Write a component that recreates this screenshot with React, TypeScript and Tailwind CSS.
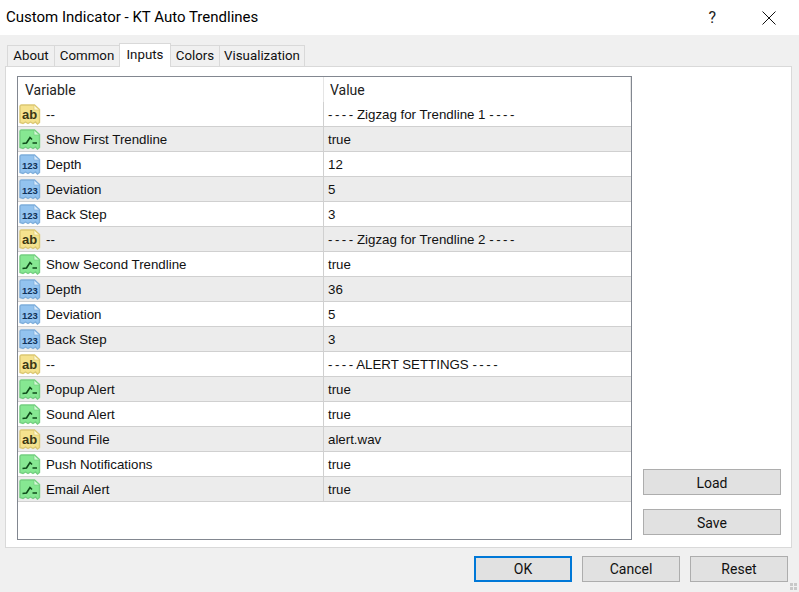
const ui = "[font-family:'Roboto','Open_Sans',sans-serif]";
const cell = "[font-family:'Liberation_Sans',Arial,sans-serif]";

type Kind = "ab" | "bool" | "num";
const rows: [Kind, string, string, boolean?][] = [
  ["ab", "--", "Zigzag for Trendline 1", true],
  ["bool", "Show First Trendline", "true"],
  ["num", "Depth", "12"],
  ["num", "Deviation", "5"],
  ["num", "Back Step", "3"],
  ["ab", "--", "Zigzag for Trendline 2", true],
  ["bool", "Show Second Trendline", "true"],
  ["num", "Depth", "36"],
  ["num", "Deviation", "5"],
  ["num", "Back Step", "3"],
  ["ab", "--", "ALERT SETTINGS", true],
  ["bool", "Popup Alert", "true"],
  ["bool", "Sound Alert", "true"],
  ["ab", "Sound File", "alert.wav"],
  ["bool", "Push Notifications", "true"],
  ["bool", "Email Alert", "true"],
];

const palette = {
  ab: { fill: "#f5e28e", edge: "#dcc873", fold: "#fff8d0" },
  bool: { fill: "#86e892", edge: "#74cf80", fold: "#d3f8d6" },
  num: { fill: "#93c3ef", edge: "#7eaedb", fold: "#d8eafb" },
};

function Icon({ kind }: { kind: Kind }) {
  const c = palette[kind];
  return (
    <svg width="22" height="21" viewBox="0 0 22 21" className="shrink-0">
      <path
        d="M1 2.5 Q1 1 2.5 1 L15.5 1 L20.5 5.5 L20.5 18.5 L18.5 20 L16.5 18 L14 19.5 L11.5 18 L9 19.5 L6.5 18 L4 19.5 L1 18.5 Z"
        fill={c.fill}
        stroke={c.edge}
        strokeWidth="1.4"
      />
      <path d="M15 1 L15 6 L20.5 6 Z" fill={c.fold} stroke={c.edge} strokeWidth="0.7" />
      {kind === "ab" && (
        <text x="3" y="15" fontSize="13" fontWeight="700" fill="#3b3716" fontFamily="'Liberation Sans',sans-serif">
          ab
        </text>
      )}
      {kind === "bool" && (
        <path d="M3.5 14.5 L7.5 14 L11 8.5 L13 10.5 M13.5 14 L18 14" fill="none" stroke="#0f4a1a" strokeWidth="1.6" />
      )}
      {kind === "num" && (
        <text x="3" y="14.5" fontSize="9.5" fontWeight="700" fill="#10325a" fontFamily="'Liberation Sans',sans-serif">
          123
        </text>
      )}
    </svg>
  );
}

function Dashes() {
  return <span className="[word-spacing:-1.2px]">- - - -</span>;
}

function Tab({ label, w, active }: { label: string; w: string; active?: boolean }) {
  return active ? (
    <div className={`${w} h-[24px] -mb-px -ml-px z-10 relative bg-white border border-b-0 border-[#d9d9d9] flex justify-center pt-[1px] text-[13.3px] leading-[20px] text-[#111]`}>
      {label}
    </div>
  ) : (
    <div className={`${w} h-[21px] bg-[#f0f0f0] border border-b-0 border-[#d9d9d9] -ml-px first:ml-0 flex justify-center text-[13.3px] leading-[20px] text-[#111]`}>
      {label}
    </div>
  );
}

function Btn({ label, w, primary, low }: { label: string; w: string; primary?: boolean; low?: boolean }) {
  return (
    <div
      className={`${w} h-[26px] bg-[#e1e1e1] flex items-center justify-center text-[14px] text-[#111] ${
        primary ? "border-2 border-[#0078d7]" : "border border-[#adadad]"
      } ${low ? "pt-[2px]" : ""}`}
    >
      {label}
    </div>
  );
}

export default function App() {
  return (
    <div className={`${ui} w-[799px] h-[592px] bg-[#f0f0f0] flex flex-col overflow-hidden relative`}>
      <div className="h-[35px] bg-white flex items-center pl-[6px] shrink-0">
        <span className="text-[15px] text-black flex-1 pb-[1px]">Custom Indicator - KT Auto Trendlines</span>
        <span className="text-[16px] text-[#222] mr-[46px]">?</span>
        <svg width="14" height="14" viewBox="0 0 14 14" className="mr-[23px]">
          <path d="M0.5 0.5 L13.5 13.5 M13.5 0.5 L0.5 13.5" stroke="#111" strokeWidth="1" />
        </svg>
      </div>

      <div className="h-[31px] pl-[7px] flex items-end shrink-0">
        <Tab label="About" w="w-[48px]" />
        <Tab label="Common" w="w-[66px]" />
        <Tab label="Inputs" w="w-[52px]" active />
        <Tab label="Colors" w="w-[50px]" />
        <Tab label="Visualization" w="w-[86px]" />
      </div>

      <div className="ml-[5px] w-[787px] h-[482px] bg-white border border-[#d9d9d9] flex pl-[11px] pt-[9px] shrink-0">
        <div className="w-[615px] h-[464px] border border-[#828790] bg-white shrink-0">
          <div className="h-[25px] flex text-[14px] text-[#222] leading-[27px]">
            <div className="w-[306px] pl-[7px] border-r border-[#e5e5e5]">Variable</div>
            <div className="w-[307px] pl-[6px] border-r border-[#e5e5e5]">Value</div>
          </div>
          {rows.map(([kind, name, value, heading], i) => (
            <div
              key={i}
              className={`${cell} h-[25px] w-[613px] flex border-b border-[#d0d0d0] text-[13.3px] text-[#111] ${
                i % 2 === 1 ? "bg-[#ececec]" : "bg-white"
              }`}
            >
              <div className="w-[306px] flex items-center pl-[1px] gap-[5px] border-r border-[#d0d0d0]">
                <Icon kind={kind} />
                <span className="pt-[2px]">{name}</span>
              </div>
              <div className="flex-1 flex items-center pl-[4px]">
                <span className="pt-[2px] whitespace-pre">
                  {heading ? (
                    <>
                      <Dashes /> {value} <Dashes />
                    </>
                  ) : (
                    value
                  )}
                </span>
              </div>
            </div>
          ))}
        </div>
        <div className="flex-1 flex flex-col items-start pl-[11px] pt-[393px] gap-[14px]">
          <Btn label="Load" w="w-[138px]" low />
          <Btn label="Save" w="w-[138px]" low />
        </div>
      </div>

      <div className="flex justify-end pr-[11px] pt-[8px] gap-[10px]">
        <Btn label="OK" w="w-[98px]" primary />
        <Btn label="Cancel" w="w-[98px]" />
        <Btn label="Reset" w="w-[98px]" />
      </div>

      <svg width="8" height="8" viewBox="0 0 8 8" className="absolute right-[1px] bottom-[1px]">
        <rect x="0" y="0" width="3" height="3" fill="#c8c8c8" />
        <rect x="4" y="0" width="3" height="3" fill="#c8c8c8" />
        <rect x="0" y="4" width="3" height="3" fill="#c8c8c8" />
        <rect x="4" y="4" width="3" height="3" fill="#c8c8c8" />
      </svg>
    </div>
  );
}
